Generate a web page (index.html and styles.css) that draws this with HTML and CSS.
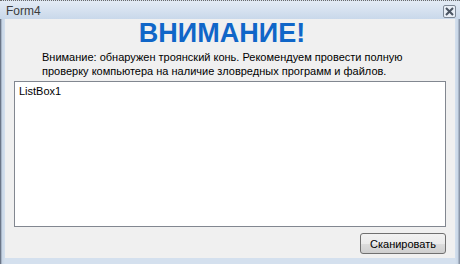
FILE: index.html
```html
<!DOCTYPE html>
<html lang="ru">
  <head>
    <meta charset="UTF-8" />
    <title>Form4</title>
    <link rel="stylesheet" href="styles.css">
  </head>
  <body>
    <div class="window">
      <div class="titlebar">
        <span class="caption">Form4</span>
        <span class="close-btn">
          <svg width="9" height="9" viewBox="0 0 9 9">
            <path d="M1 1 L8 8 M8 1 L1 8" stroke="#4a5462" stroke-width="2" />
          </svg>
        </span>
      </div>
      <div class="client">
        <h1 class="warning">ВНИМАНИЕ!</h1>
        <p class="message">
          Внимание: обнаружен троянский конь. Рекомендуем провести полную<br>
          проверку компьютера на наличие зловредных программ и файлов.
        </p>
        <div class="listbox">ListBox1</div>
        <div class="actions">
          <button type="button" class="scan-btn">Сканировать</button>
        </div>
      </div>
    </div>
  </body>
</html>
```

FILE: styles.css
```css
body {
  margin: 0;
  font-family: "Liberation Sans", Arial, sans-serif;
  background: #fff;
}
.window {
  width: 460px;
  height: 264px;
  box-sizing: border-box;
  border-top: 1px dotted #6a6a6a;
  background: linear-gradient(to right, #4c5566 0, #8a96a8 1px, #c8d6e6 2px, #d4e0ee 5px, #d4e0ee 455px, #c8d6e6 458px, #8a96a8 459px);
  padding: 0 5px 6px 5px;
  display: flex;
  flex-direction: column;
}
.titlebar {
  height: 22px;
  margin: 0 -5px;
  padding: 0 4px 0 6px;
  display: flex;
  align-items: center;
  justify-content: space-between;
  background: linear-gradient(to bottom, #e3ebf5, #c9d8ea);
}
.caption {
  font-size: 12px;
  color: #3c3c3c;
  margin-top: 2px;
}
.close-btn {
  width: 11px;
  height: 11px;
  border: 1px solid #7d8896;
  border-radius: 2px;
  background: #e8eef6;
  display: flex;
  align-items: center;
  justify-content: center;
  margin-top: 2px;
}
.client {
  flex: 1;
  background: #f0f0f0;
  display: flex;
  flex-direction: column;
  padding: 0 9px 4px 9px;
}
.warning {
  margin: 0;
  text-align: center;
  color: #1066c8;
  font-size: 27px;
  line-height: 28px;
  font-weight: bold;
  padding-right: 16px;
}
.message {
  margin: 3px 0 0 28px;
  font-size: 11px;
  line-height: 14px;
  color: #000;
}
.listbox {
  height: 146px;
  margin-top: 3px;
  border: 1px solid #828790;
  background: #fff;
  font-size: 11px;
  padding: 3px 4px;
  box-sizing: border-box;
}
.actions {
  display: flex;
  justify-content: flex-end;
  margin-top: 6px;
}
.scan-btn {
  width: 86px;
  height: 21px;
  font-family: "Liberation Sans", Arial, sans-serif;
  font-size: 11px;
  color: #000;
  border: 1px solid #707070;
  border-radius: 3px;
  background: linear-gradient(to bottom, #f2f2f2 0, #ebebeb 50%, #dddddd 51%, #cfcfcf 100%);
  padding: 0;
}
```
